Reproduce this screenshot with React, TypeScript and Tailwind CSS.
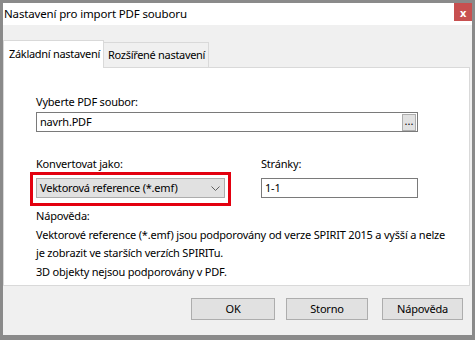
import React from "react";

const font = { fontFamily: '"Noto Sans", "Open Sans", sans-serif' };

function TitleBar() {
	return (
		<div className="flex h-[22px] shrink-0 items-start justify-between bg-white">
			<span className="pl-[1px] pt-[3px] text-[11.5px] leading-[16px] tracking-[-0.15px] text-black">
				Nastavení pro import PDF souboru
			</span>
			<button className="flex h-[18px] w-[18px] items-center justify-center bg-[#c75050] text-[11px] font-bold leading-none text-white">
				x
			</button>
		</div>
	);
}

function Tabs() {
	return (
		<div className="mt-[15px] flex h-[27px] shrink-0 items-end whitespace-nowrap tracking-[-0.3px]">
			<div className="relative z-10 -mb-px flex h-[28px] w-[101px] items-center border-x border-t border-[#d9d9d9] bg-white pl-[5px]">
				Základní nastavení
			</div>
			<div className="flex h-[25px] w-[105px] items-center border-r border-t border-[#d9d9d9] bg-[#f0f0f0] pl-[4px]">
				Rozšířené nastavení
			</div>
		</div>
	);
}

function Field({ value, className }: { value: string; className: string }) {
	return (
		<div className={`flex items-center border border-[#7a7a7a] bg-white pl-[3px] ${className}`}>
			{value}
		</div>
	);
}

export default function App() {
	return (
		<div className="h-[340px] w-[475px] bg-[#8a8a8a] px-[3px] pb-[5px] pt-[3px] text-[11px] tracking-[-0.2px] text-black" style={font}>
			<div className="flex h-full flex-col bg-[#f0f0f0]">
				<TitleBar />
				<Tabs />

				<div className="mr-[2px] h-[219px] shrink-0 whitespace-nowrap border border-[#d9d9d9] bg-white pl-[32px] pt-[26px]">
					<div className="leading-[16px]">Vyberte PDF soubor:</div>
					<div className="mt-[2px] flex h-[20px] w-[382px] items-center justify-between border border-[#7a7a7a] pl-[3px]">
						<span>navrh.PDF</span>
						<button className="mr-[1px] flex h-[17px] w-[14px] items-center justify-center border border-[#adadad] bg-[#e1e1e1] pb-[4px] text-[11px] leading-none tracking-normal">
							...
						</button>
					</div>

					<div className="mt-[24px] flex gap-[36px]">
						<div className="w-[189px]">
							<div className="leading-[16px]">Konvertovat jako:</div>
							<div className="relative mt-[6px]">
								<div className="flex h-[20px] items-center justify-between border border-[#adadad] bg-[#e1e1e1] pl-[3px] pr-[4px]">
									<span>Vektorová reference (*.emf)</span>
									<svg width="9" height="5" viewBox="0 0 9 5" fill="none" stroke="#606060" strokeWidth="1">
										<path d="M0.5 0.5 L4.5 4.5 L8.5 0.5" />
									</svg>
								</div>
								<div className="absolute -bottom-[8px] -left-[6px] -right-[6px] -top-[6px] border-[3px] border-[#e3000f]" />
							</div>
						</div>
						<div className="w-[157px]">
							<div className="leading-[16px]">Stránky:</div>
							<Field value="1-1" className="mt-[6px] h-[20px]" />
						</div>
					</div>

					<div className="mt-[9px] leading-[18.5px]">
						<div>Nápověda:</div>
						<div>Vektorové reference (*.emf) jsou podporovány od verze SPIRIT 2015 a vyšší a nelze</div>
						<div>je zobrazit ve starších verzích SPIRITu.</div>
						<div>3D objekty nejsou podporovány v PDF.</div>
					</div>
				</div>

				<div className="flex flex-1 items-start justify-end pr-[9px] pt-[12px]">
					<button className="h-[22px] w-[84px] border border-[#adadad] bg-[#e1e1e1]">OK</button>
					<button className="ml-[11px] h-[22px] w-[82px] border border-[#adadad] bg-[#e1e1e1]">Storno</button>
					<button className="ml-[14px] h-[22px] w-[81px] border border-[#adadad] bg-[#e1e1e1]">Nápověda</button>
				</div>
			</div>
		</div>
	);
}
